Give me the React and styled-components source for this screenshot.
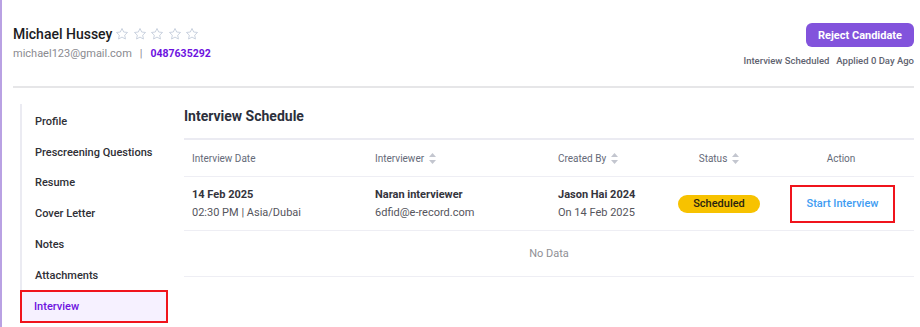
import React from "react";
import styled, { createGlobalStyle } from "styled-components";

const Global = createGlobalStyle`
    body {
        margin: 0;
        background: #fff;
        font-family: Roboto, "Liberation Sans", sans-serif;
        color: #2b2b33;
    }
    * { box-sizing: border-box; }
`;

const Page = styled.div`
    border-left: 2px solid #b9a1e3;
    min-height: 327px;
    padding: 0 6px 0 11px;
`;

const Top = styled.div`
    display: flex;
    justify-content: space-between;
    padding: 23px 0 0;
    height: 88px;
    border-bottom: 2px solid #e6e6e8;
`;

const Who = styled.div`
    padding-top: 2px;
    h1 {
        display: flex;
        align-items: center;
        margin: 0;
        font-size: 14px;
        font-weight: 500;
        color: #1c1c22;
        line-height: 18px;
    }
    p {
        margin: 4px 0 0;
        font-size: 11px;
        color: #8a8a90;
        span { margin: 0 8px 0 8px; }
        b { color: #6d12e0; font-weight: 700; font-size: 10.5px; }
    }
`;

const Stars = styled.span`
    display: inline-flex;
    gap: 3.5px;
    margin-left: 3px;
`;

const Side = styled.div`
    display: flex;
    flex-direction: column;
    align-items: flex-end;
    button {
        background: #8253dc;
        color: #fff;
        border: 0;
        border-radius: 6px;
        height: 24px;
        width: 108px;
        font: 700 11px Roboto, sans-serif;
    }
    p {
        margin: 8px 0 0;
        font-size: 9.5px;
        font-weight: 500;
        color: #5f6370;
        span + span { margin-left: 7px; }
    }
`;

const Body = styled.div`
    display: flex;
    padding-top: 16px;
    gap: 17px;
`;

const Menu = styled.ul`
    list-style: none;
    margin: 0 0 0 7px;
    padding: 2px 0 0;
    width: 147px;
    border-left: 2px solid #ebebf2;
`;

const Item = styled.li`
    height: 30.8px;
    display: flex;
    align-items: center;
    padding-left: 13px;
    font-size: 11px;
    font-weight: 500;
    color: ${p => (p.active ? "#6d12e0" : "#2f2f36")};
    background: ${p => (p.active ? "#f6f1ff" : "transparent")};
    outline: ${p => (p.active ? "2px solid #f0141c" : "none")};
    outline-offset: -1px;
    margin-left: ${p => (p.active ? "-1px" : "0")};
`;

const Main = styled.div`
    flex: 1;
    h2 {
        margin: 0;
        height: 36px;
        padding-top: 3px;
        line-height: 18px;
        font-size: 14px;
        font-weight: 700;
        color: #2c303c;
        border-bottom: 2px solid #ebebf2;
    }
`;

const Row = styled.div`
    display: grid;
    grid-template-columns: 183px 183px 119px 100px 144px;
    align-items: center;
    height: ${p => (p.head ? "37px" : "54px")};
    border-bottom: 1.5px solid #eeeef4;
`;

const Th = styled.div`
    font-size: 10px;
    color: #656a78;
    display: flex;
    align-items: center;
    gap: 5px;
    justify-content: ${p => (p.center ? "center" : "flex-start")};
    padding-left: ${p => (p.center ? "0" : "8px")};
`;

const Td = styled.div`
    font-size: 11px;
    line-height: 18px;
    color: #55555c;
    strong { display: block; color: #34343c; font-weight: 700; }
    display: ${p => (p.center ? "flex" : "block")};
    justify-content: center;
    padding-left: ${p => (p.center ? "0" : "8px")};
`;

const Badge = styled.span`
    background: #f7c200;
    color: #2a2410;
    border-radius: 9px;
    width: 82px;
    height: 18px;
    display: flex;
    align-items: center;
    justify-content: center;
    font-size: 11px;
    font-weight: 500;
`;

const Action = styled.span`
    border: 2px solid #f0141c;
    width: 105px;
    height: 38px;
    display: flex;
    align-items: center;
    justify-content: center;
    color: #3e9cf2;
    font-size: 11px;
    font-weight: 500;
    margin-left: 3px;
`;

const Empty = styled.div`
    height: 46px;
    display: flex;
    align-items: center;
    justify-content: center;
    font-size: 11px;
    color: #8f8f95;
    border-bottom: 1.5px solid #eeeef4;
`;

const Star = () => (
    <svg width="14" height="14" viewBox="0 0 24 24" fill="none" stroke="#c6cfdd" strokeWidth="1.6" strokeLinejoin="round">
        <path d="M12 2.5l2.9 6.1 6.6.8-4.9 4.6 1.3 6.6L12 17.3l-5.9 3.3 1.3-6.6-4.9-4.6 6.6-.8z" />
    </svg>
);

const Sort = () => (
    <svg width="7" height="11" viewBox="0 0 7 11" fill="#c3c6cf">
        <path d="M3.5 0L7 4H0z" />
        <path d="M3.5 11L0 7h7z" />
    </svg>
);

const menu = ["Profile", "Prescreening Questions", "Resume", "Cover Letter", "Notes", "Attachments", "Interview"];

export default function App() {
    return (
        <Page>
            <Global />
            <Top>
                <Who>
                    <h1>
                        Michael Hussey
                        <Stars>{[0, 1, 2, 3, 4].map(i => <Star key={i} />)}</Stars>
                    </h1>
                    <p>
                        michael123@gmail.com<span>|</span><b>0487635292</b>
                    </p>
                </Who>
                <Side>
                    <button>Reject Candidate</button>
                    <p><span>Interview Scheduled</span><span>Applied 0 Day Ago</span></p>
                </Side>
            </Top>
            <Body>
                <Menu>
                    {menu.map(m => (
                        <Item key={m} active={m === "Interview"}>{m}</Item>
                    ))}
                </Menu>
                <Main>
                    <h2>Interview Schedule</h2>
                    <Row head>
                        <Th>Interview Date</Th>
                        <Th>Interviewer <Sort /></Th>
                        <Th>Created By <Sort /></Th>
                        <Th center>Status <Sort /></Th>
                        <Th center>Action</Th>
                    </Row>
                    <Row>
                        <Td><strong>14 Feb 2025</strong>02:30 PM | Asia/Dubai</Td>
                        <Td><strong>Naran interviewer</strong>6dfid@e-record.com</Td>
                        <Td><strong>Jason Hai 2024</strong>On 14 Feb 2025</Td>
                        <Td center><Badge>Scheduled</Badge></Td>
                        <Td center><Action>Start Interview</Action></Td>
                    </Row>
                    <Empty>No Data</Empty>
                </Main>
            </Body>
        </Page>
    );
}
